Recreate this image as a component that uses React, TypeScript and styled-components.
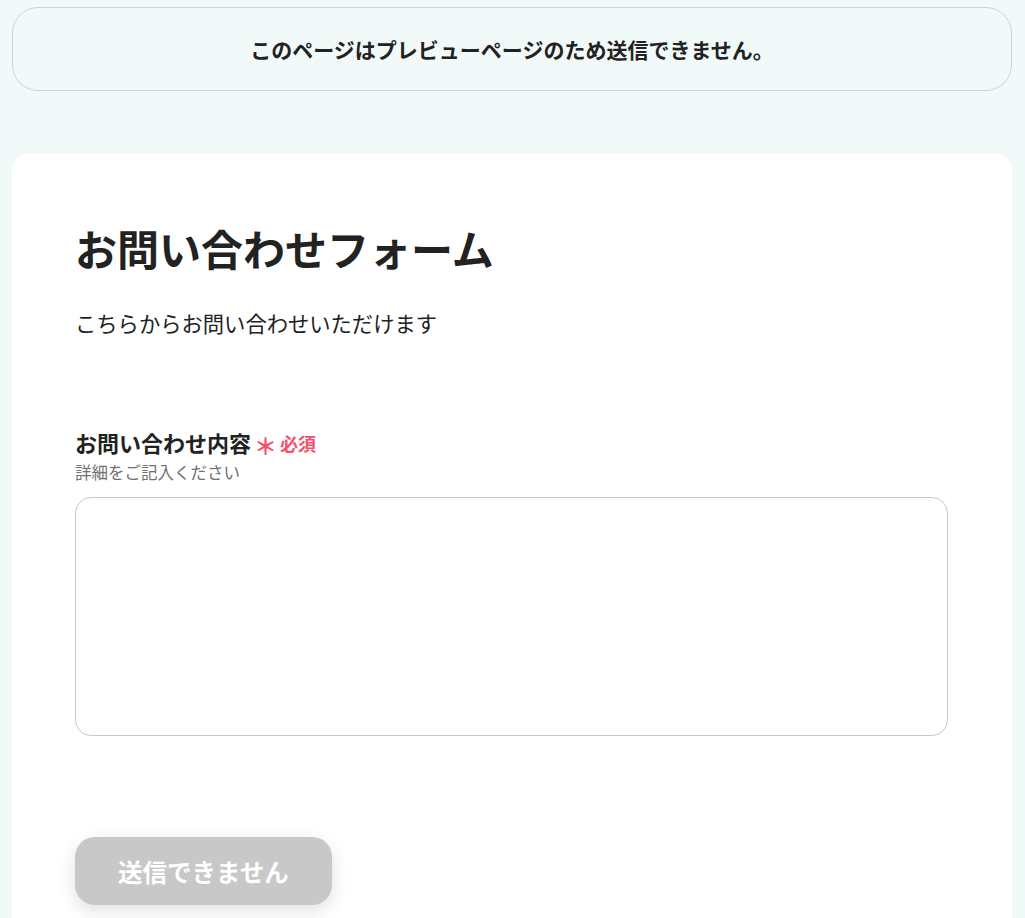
import React from "react";
import styled, { createGlobalStyle } from "styled-components";

const Global = createGlobalStyle`
  html, body {
    margin: 0;
    padding: 0;
    background: #f2faf9;
  }
  body {
    font-family: "Noto Sans CJK JP", "Noto Sans", sans-serif;
    color: #222;
  }
  * { box-sizing: border-box; }
`;

const Page = styled.div`
  padding: 7px 13px 0 12px;
  display: flex;
  flex-direction: column;
  gap: 63px;
`;

const Notice = styled.div`
  height: 84px;
  border: 1px solid #cfd4d4;
  border-radius: 26px;
  display: flex;
  align-items: center;
  justify-content: center;
  font-size: 21px;
  font-weight: 700;
  color: #222;
`;

const Card = styled.section`
  background: #fff;
  border-radius: 16px 16px 0 0;
  padding: 66px 64px 40px 63px;
  display: flex;
  flex-direction: column;
`;

const Title = styled.h1`
  margin: 0;
  font-size: 42px;
  line-height: 56px;
  font-weight: 700;
  color: #222;
`;

const Lead = styled.p`
  margin: 32px 0 0;
  font-size: 21.3px;
  line-height: 30px;
  color: #222;
`;

const Field = styled.div`
  margin-top: 89px;
  display: flex;
  flex-direction: column;
`;

const Label = styled.label`
  display: flex;
  align-items: center;
  gap: 3px;
  font-size: 22px;
  font-weight: 700;
  line-height: 28px;
  color: #222;
`;

const Required = styled.span`
  color: #f4506c;
  font-size: 18px;
  font-weight: 700;
  display: inline-flex;
  align-items: center;
  gap: 3px;
  margin-top: 2px;
`;

const Star = styled.span`
  font-size: 23px;
  line-height: 1;
  margin-top: 5px;
`;

const Hint = styled.div`
  font-size: 16.5px;
  line-height: 22px;
  color: #707070;
  margin-top: 4px;
`;

const TextArea = styled.textarea`
  margin-top: 14px;
  height: 239px;
  width: 100%;
  border: 1px solid #c8c8c8;
  border-radius: 16px;
  resize: none;
  outline: none;
  padding: 14px 16px;
  font: inherit;
  font-size: 16px;
  background: #fff;
`;

const Submit = styled.button`
  margin-top: 101px;
  width: 257px;
  height: 68px;
  border: none;
  border-radius: 20px;
  background: #c8c8c8;
  color: #fff;
  font-family: inherit;
  font-size: 24.5px;
  font-weight: 700;
  box-shadow: 0 6px 18px rgba(0, 0, 0, 0.12);
  cursor: not-allowed;
`;

export default function App() {
  return (
    <>
      <Global />
      <Page>
        <Notice>このページはプレビューページのため送信できません。</Notice>
        <Card>
          <Title>お問い合わせフォーム</Title>
          <Lead>こちらからお問い合わせいただけます</Lead>
          <Field>
            <Label>
              お問い合わせ内容
              <Required>
                <Star>＊</Star>必須
              </Required>
            </Label>
            <Hint>詳細をご記入ください</Hint>
            <TextArea />
          </Field>
          <div>
            <Submit disabled>送信できません</Submit>
          </div>
        </Card>
      </Page>
    </>
  );
}
